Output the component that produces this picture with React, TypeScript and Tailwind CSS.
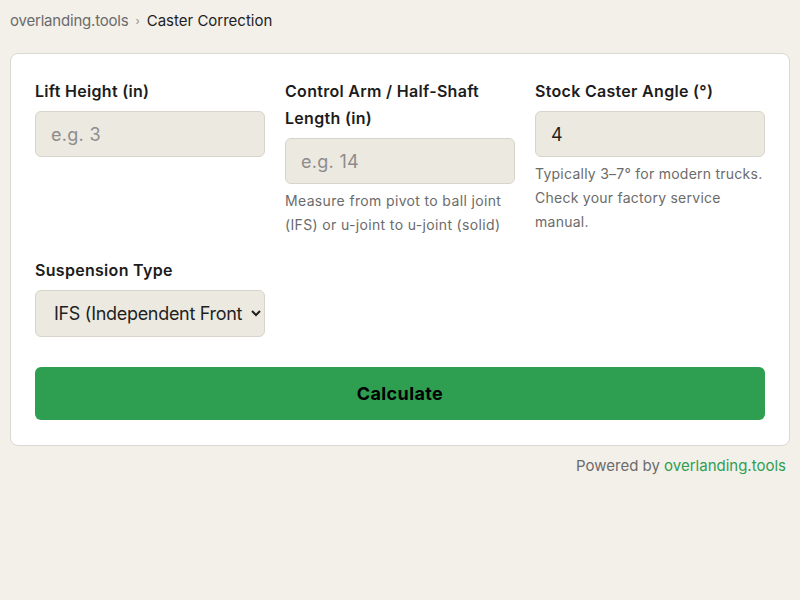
import { useState } from 'react';

const font = { fontFamily: 'Inter, "Noto Sans", sans-serif' };

export default function App() {
  const [lift, setLift] = useState('');
  const [arm, setArm] = useState('');
  const [caster, setCaster] = useState('4');
  const [type, setType] = useState('ifs');

  return (
    <div className="min-h-screen bg-[#f3f0ea] px-[10px] pt-[11px] text-[#1f1f1f]" style={font}>
      <nav className="flex items-center gap-[7px] text-[15px] leading-[20px]">
        <span className="text-[#6b6b6b] tracking-[-0.2px]">overlanding.tools</span>
        <span className="text-[11px] text-[#8a8a8a]">›</span>
        <span className="text-[#222]">Caster Correction</span>
      </nav>

      <div className="mt-[22px] rounded-lg border border-[#dcd8cf] bg-white px-6 pt-6 pb-[25px]">
        <div className="grid grid-cols-3 gap-x-5 gap-y-5">
          <div>
            <label className="block text-[16px] font-semibold leading-[27px] tracking-[0.3px] text-[#1c1c1c]">Lift Height (in)</label>
            <input
              value={lift}
              onChange={(e) => setLift(e.target.value)}
              placeholder="e.g. 3"
              className="mt-[6px] h-[46px] w-full rounded-md border border-[#d8d4ca] bg-[#ece9e1] px-[15px] text-[18px] tracking-[0.3px] text-[#1f1f1f] placeholder:text-[#8c8c8c] outline-none"
            />
          </div>
          <div>
            <label className="block text-[16px] font-semibold leading-[27px] tracking-[0.3px] text-[#1c1c1c]">
              Control Arm / Half-Shaft Length (in)
            </label>
            <input
              value={arm}
              onChange={(e) => setArm(e.target.value)}
              placeholder="e.g. 14"
              className="mt-[6px] h-[46px] w-full rounded-md border border-[#d8d4ca] bg-[#ece9e1] px-[15px] text-[18px] tracking-[0.3px] text-[#1f1f1f] placeholder:text-[#8c8c8c] outline-none"
            />
            <p className="mt-[5px] text-[14px] leading-[24px] tracking-[0.35px] text-[#6b6b6b]">
              Measure from pivot to ball joint (IFS) or u-joint to u-joint (solid)
            </p>
          </div>
          <div>
            <label className="block text-[16px] font-semibold leading-[27px] tracking-[0.3px] text-[#1c1c1c]">Stock Caster Angle (°)</label>
            <input
              value={caster}
              onChange={(e) => setCaster(e.target.value)}
              className="mt-[6px] h-[46px] w-full rounded-md border border-[#d8d4ca] bg-[#ece9e1] px-[15px] text-[18px] text-[#1f1f1f] outline-none"
            />
            <p className="mt-[5px] text-[14px] leading-[24px] tracking-[0.25px] text-[#6b6b6b]">
              Typically 3–7° for modern trucks. Check your factory service manual.
            </p>
          </div>
          <div>
            <label className="block text-[16px] font-semibold leading-[27px] tracking-[0.3px] text-[#1c1c1c]">Suspension Type</label>
            <select
              value={type}
              onChange={(e) => setType(e.target.value)}
              className="mt-[6px] h-[47px] w-full rounded-md border border-[#d8d4ca] bg-[#ece9e1] pl-[14px] pr-[2px] text-[18px] tracking-[-0.3px] text-[#1f1f1f] outline-none"
            >
              <option value="ifs">IFS (Independent Front Suspension)</option>
              <option value="solid">Solid Axle</option>
            </select>
          </div>
        </div>

        <button className="mt-[30px] h-[53px] w-full rounded-md bg-[#2e9e50] text-[18px] font-bold tracking-[0.4px] text-black">
          Calculate
        </button>
      </div>

      <p className="mt-[10px] pr-[4px] text-right text-[15px] leading-[20px] text-[#6b6b6b]">
        Powered by <span className="text-[#2e9e50]">overlanding.tools</span>
      </p>
    </div>
  );
}
